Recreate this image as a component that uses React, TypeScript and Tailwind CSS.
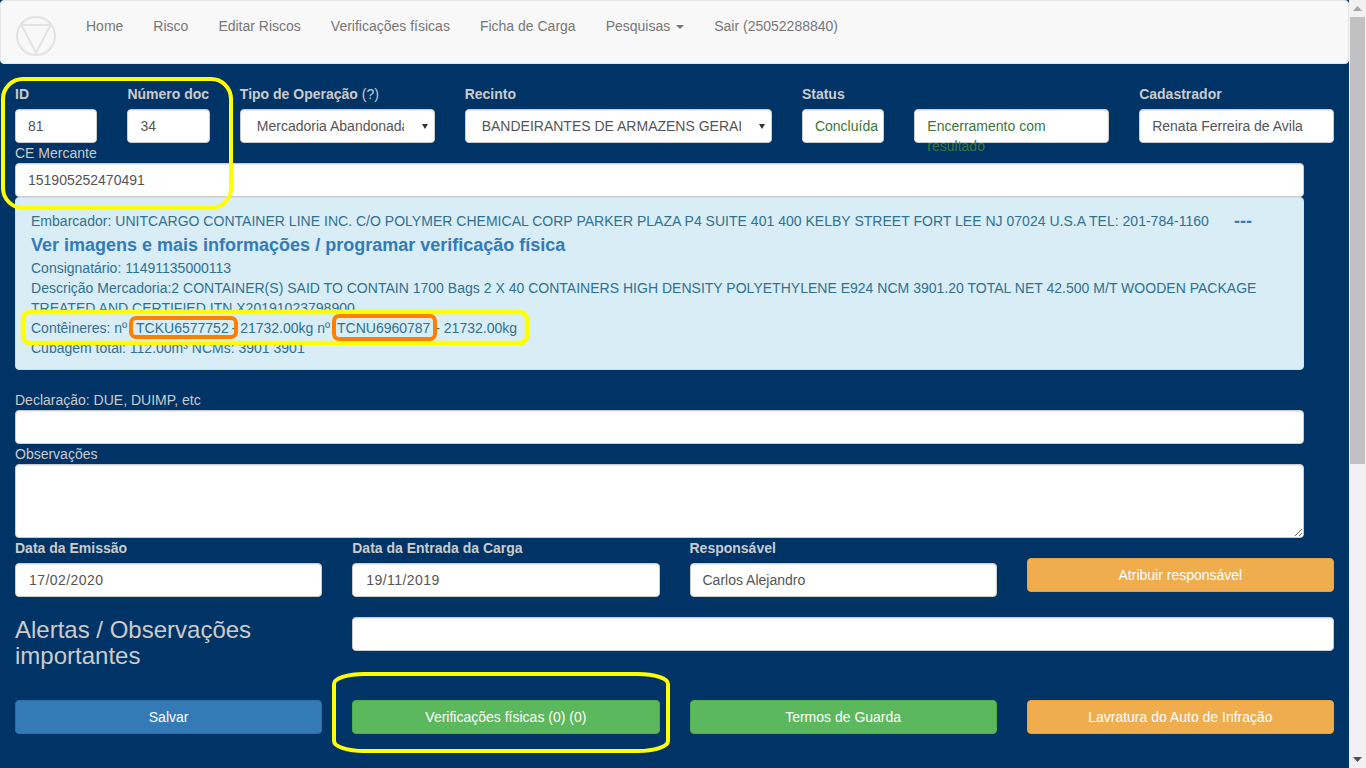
import React from 'react';

const navLinks = ['Home', 'Risco', 'Editar Riscos', 'Verificações físicas', 'Ficha de Carga'];

function TextInput({ value = '', className = '' }: { value?: string; className?: string }) {
  return (
    <input
      readOnly
      value={value}
      className={`block h-[34px] w-full rounded-[4px] border border-[#ccc] bg-white px-3 text-[14px] text-[#555] shadow-[inset_0_1px_1px_rgba(0,0,0,0.075)] outline-none ${className}`}
    />
  );
}

function FakeSelect({ value }: { value: string }) {
  return (
    <div className="flex h-[34px] w-full items-center rounded-[4px] border border-[#ccc] bg-white pl-4 pr-[6px] text-[14px] text-[#555] shadow-[inset_0_1px_1px_rgba(0,0,0,0.075)]">
      <span className="min-w-0 flex-1 overflow-hidden whitespace-nowrap">{value}</span>
      <svg width="6" height="5" viewBox="0 0 6 5" className="ml-[18px] shrink-0">
        <path d="M0 0h6L3 5z" fill="#333" />
      </svg>
    </div>
  );
}

function Label({ children }: { children: React.ReactNode }) {
  return <div className="mb-[5px] h-5 text-[14px] font-bold leading-5 text-[#ccc]">{children}</div>;
}

function Btn({ color, children }: { color: string; children: React.ReactNode }) {
  return (
    <button className={`block h-[34px] w-full rounded-[4px] border text-center text-[14px] text-white ${color}`}>
      {children}
    </button>
  );
}

function Logo() {
  return (
    <svg width="42" height="42" viewBox="0 0 42 42" className="shrink-0" fill="none" stroke="#e3e3e3" strokeWidth="2">
      <circle cx="21" cy="21" r="19" />
      <path d="M6.5 10h29L21 38z" />
    </svg>
  );
}

function Scrollbar() {
  return (
    <div className="flex h-full w-[17px] shrink-0 flex-col items-center bg-[#f1f1f1]">
      <div className="flex h-[17px] w-full items-center justify-center">
        <svg width="9" height="5" viewBox="0 0 9 5">
          <path d="M0 5L4.5 0 9 5z" fill="#a3a3a3" />
        </svg>
      </div>
      <div className="h-[447px] w-[15px] bg-[#c1c1c1]" />
      <div className="flex-1" />
      <div className="flex h-[17px] w-full items-center justify-center">
        <svg width="9" height="5" viewBox="0 0 9 5">
          <path d="M0 0L4.5 5 9 0z" fill="#505050" />
        </svg>
      </div>
    </div>
  );
}

function Annotations() {
  return (
    <svg width="1366" height="768" viewBox="0 0 1366 768" fill="none" className="pointer-events-none absolute left-0 top-0">
      <rect x="3" y="79" width="228" height="129" rx="20" stroke="#ffff00" strokeWidth="4" />
      <rect x="23" y="312" width="504" height="31" rx="7" stroke="#ffff00" strokeWidth="4.5" />
      <rect x="131" y="318" width="105" height="19" rx="5" stroke="#ff8000" strokeWidth="4" />
      <rect x="334" y="316" width="101" height="23" rx="5" stroke="#ff8000" strokeWidth="4" />
      <rect x="334" y="674" width="334" height="77" rx="30" ry="10" stroke="#ffff00" strokeWidth="4" />
    </svg>
  );
}

export default function App() {
  return (
    <div className="relative flex h-[768px] w-[1366px] overflow-hidden bg-[#003366] font-['Liberation_Sans',Arial,sans-serif] text-[14px] leading-5">
      <div className="w-[1349px] shrink-0">
        {/* Navbar */}
        <nav className="flex h-[64px] items-start rounded-[4px] border border-[#e7e7e7] bg-[#f8f8f8]">
          <div className="ml-[14px] mt-[14px]">
            <Logo />
          </div>
          <ul className="ml-[14px] flex text-[#777]">
            {navLinks.map((link) => (
              <li key={link} className="px-[15px] py-[15px]">
                {link}
              </li>
            ))}
            <li className="flex items-center px-[15px] py-[15px]">
              Pesquisas
              <span className="ml-[6px] mt-[2px] h-0 w-0 border-x-4 border-t-4 border-x-transparent border-t-[#777]" />
            </li>
            <li className="px-[15px] py-[15px]">Sair (25052288840)</li>
          </ul>
        </nav>

        {/* Top row */}
        <div className="mt-5 grid grid-cols-12 gap-x-[30px] px-[15px]">
          <div>
            <Label>ID</Label>
            <TextInput value="81" />
          </div>
          <div>
            <Label>
              <span className="whitespace-nowrap">Número doc</span>
            </Label>
            <TextInput value="34" />
          </div>
          <div className="col-span-2">
            <Label>
              Tipo de Operação <span className="font-normal">(?)</span>
            </Label>
            <FakeSelect value="Mercadoria Abandonada" />
          </div>
          <div className="col-span-3">
            <Label>Recinto</Label>
            <FakeSelect value="BANDEIRANTES DE ARMAZENS GERAIS" />
          </div>
          <div>
            <Label>Status</Label>
            <TextInput value="Concluída" className="pr-0 !text-[#3c763d]" />
          </div>
          <div className="col-span-2">
            <div className="mb-[5px] h-5" />
            <div className="h-[34px] rounded-[4px] border border-[#ccc] bg-white px-3 py-[6px] text-[#3c763d] shadow-[inset_0_1px_1px_rgba(0,0,0,0.075)]">
              Encerramento com resultado
            </div>
          </div>
          <div className="col-span-2">
            <Label>Cadastrador</Label>
            <TextInput value="Renata Ferreira de Avila" />
          </div>
        </div>

        {/* CE Mercante + info */}
        <div className="ml-[15px] w-[1289px]">
          <div className="h-5 text-[#ccc]">CE Mercante</div>
          <TextInput value="151905252470491" />
          <div className="h-[173px] rounded-[4px] border border-[#bce8f1] bg-[#d9edf7] px-[15px] pt-[13px] text-[#31708f]">
            <div className="flex h-5 items-center whitespace-nowrap tracking-[0.02px]">
              Embarcador: UNITCARGO CONTAINER LINE INC. C/O POLYMER CHEMICAL CORP PARKER PLAZA P4 SUITE 401 400 KELBY STREET FORT LEE NJ 07024 U.S.A TEL: 201-784-1160
              <span className="ml-[25px] text-[18px] font-bold leading-none text-[#337ab7]">---</span>
            </div>
            <div className="h-[27px] text-[18px] font-bold leading-[28px] text-[#337ab7]">
              Ver imagens e mais informações / programar verificação física
            </div>
            <div>Consignatário: 11491135000113</div>
            <div className="tracking-[0.015px]">
              Descrição Mercadoria:2 CONTAINER(S) SAID TO CONTAIN 1700 Bags 2 X 40 CONTAINERS HIGH DENSITY POLYETHYLENE E924 NCM 3901.20 TOTAL NET 42.500 M/T WOODEN PACKAGE TREATED AND CERTIFIED ITN X20191023798900
            </div>
            <div>
              Contêineres: nº <span className="ml-[5px] mr-[-1px]">TCKU6577752</span> - 21732.00kg nº{' '}
              <span className="ml-[3px] mr-[1px]">TCNU6960787</span> - 21732.00kg
            </div>
            <div>Cubagem total: 112.00m³ NCMs: 3901 3901</div>
          </div>
          <div className="mt-5 h-5 text-[#ccc]">Declaração: DUE, DUIMP, etc</div>
          <TextInput />
          <div className="h-5 text-[#ccc]">Observações</div>
          <textarea
            readOnly
            className="block h-[74px] w-full rounded-[4px] border border-[#ccc] bg-white shadow-[inset_0_1px_1px_rgba(0,0,0,0.075)] outline-none"
          />
        </div>

        {/* Dates */}
        <div className="grid h-[59px] grid-cols-4 gap-x-[30px] px-[15px]">
          <div>
            <Label>Data da Emissão</Label>
            <TextInput value="17/02/2020" className="pl-[13px] tracking-[0.45px]" />
          </div>
          <div>
            <Label>Data da Entrada da Carga</Label>
            <TextInput value="19/11/2019" className="pl-[13px] tracking-[0.45px]" />
          </div>
          <div>
            <Label>Responsável</Label>
            <TextInput value="Carlos Alejandro" />
          </div>
          <div className="pt-5">
            <Btn color="border-[#eea236] bg-[#f0ad4e]">Atribuir responsável</Btn>
          </div>
        </div>

        {/* Alertas */}
        <div className="mt-5 grid grid-cols-4 gap-x-[30px] px-[15px]">
          <h3 className="text-[24px] leading-[26.4px] text-[#ccc]">Alertas / Observações importantes</h3>
          <div className="col-span-3">
            <TextInput />
          </div>
        </div>

        {/* Actions */}
        <div className="mt-[30px] grid grid-cols-4 gap-x-[30px] px-[15px]">
          <Btn color="border-[#2e6da4] bg-[#337ab7]">Salvar</Btn>
          <Btn color="border-[#4cae4c] bg-[#5cb85c]">Verificações físicas (0) (0)</Btn>
          <Btn color="border-[#4cae4c] bg-[#5cb85c]">Termos de Guarda</Btn>
          <Btn color="border-[#eea236] bg-[#f0ad4e]">Lavratura do Auto de Infração</Btn>
        </div>
      </div>
      <Scrollbar />
      <Annotations />
    </div>
  );
}
